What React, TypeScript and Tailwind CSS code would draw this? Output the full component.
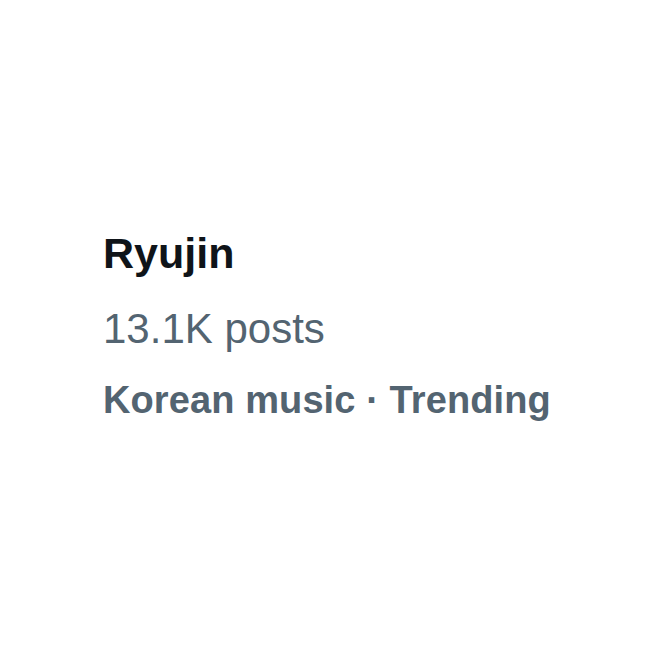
export default function App() {
    return (
        <div className="w-[648px] h-[648px] bg-white flex flex-col pt-[225px] pl-[103px] font-['Liberation_Sans',Arial,sans-serif]">
            <div className="text-[43px] leading-[56px] font-bold text-[#0f1419]">Ryujin</div>
            <div className="mt-[20px] text-[42px] leading-[56px] text-[#536471]">13.1K posts</div>
            <div className="mt-[15px] text-[38px] leading-[56px] font-bold text-[#536471] tracking-[0.1px]">Korean music · Trending</div>
        </div>
    );
}
